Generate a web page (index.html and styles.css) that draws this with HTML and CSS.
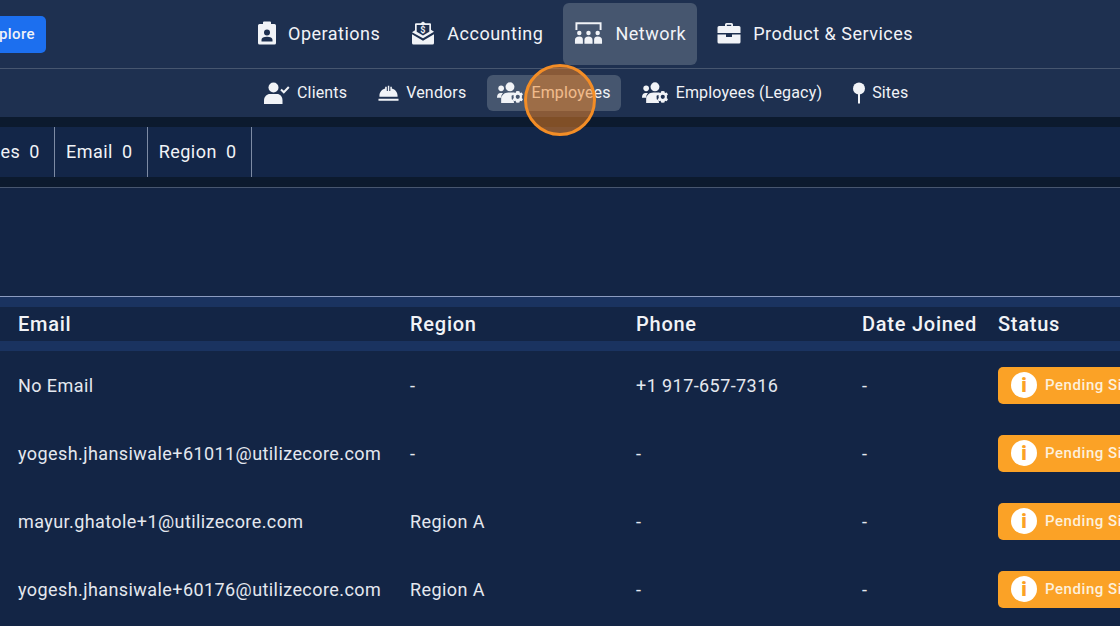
FILE: index.html
```html
<!DOCTYPE html>
<html>

<head>
    <meta charset="utf-8">
    <title>Employees</title>
    <link rel="stylesheet" href="styles.css">
</head>

<body>

<div class="page">
    <div class="topbar">
        <a class="explore_btn">Explore</a>
        <nav class="main_nav">
            <a class="main_link">
                <svg class="main_icon" viewBox="0 0 18 24" width="18" height="24"><path fill="#f1f3f7" fill-rule="evenodd" d="M5 1.500a1 1 0 0 1 1-1h6a1 1 0 0 1 1 1V3h3.500A1.500 1.500 0 0 1 18 4.500V22a1.500 1.500 0 0 1-1.500 1.500h-15A1.500 1.500 0 0 1 0 22V4.500A1.500 1.500 0 0 1 1.500 3H5zM9 8.500a3 3 0 1 0 0 6 3 3 0 0 0 0-6zM3.500 20.500h11v-1.800c0-1.800-2.200-3-5.500-3s-5.500 1.200-5.500 3z"/></svg>
                Operations
            </a>
            <a class="main_link">
                <svg class="main_icon" viewBox="0 0 24 24" width="24" height="24"><path fill="#f1f3f7" d="M12 .5l2.500 1.800H19a1 1 0 0 1 1 1v5.500l3 2-11 6.500L1 11.300l3-2V3.300a1 1 0 0 1 1-1h4.500z"/><path fill="#f1f3f7" d="M1 13.300l11 6.500 11-6.500V22a1.500 1.500 0 0 1-1.500 1.500h-19A1.500 1.500 0 0 1 1 22z"/><path fill="#1e3050" d="M5.700 4h12.600v6.800L12 14.600l-6.300-3.800z"/><text x="12" y="11.500" text-anchor="middle" class="icon_dollar">$</text></svg>
                Accounting
            </a>
            <a class="main_link active">
                <svg class="main_icon" viewBox="0 0 30 24" width="29" height="24"><path fill="none" stroke="#f1f3f7" stroke-width="2" d="M2.500 9V2h25v7"/><g fill="#f1f3f7"><circle cx="5.500" cy="12" r="2.300"/><circle cx="15" cy="12" r="2.300"/><circle cx="24.500" cy="12" r="2.300"/><path d="M1 23v-3.500c0-2.500 1.500-3.800 4.500-3.800s3.700 1.300 3.700 3.800V23zM10.800 23v-3.500c0-2.500 1.500-3.800 4.200-3.800s4.200 1.300 4.200 3.800V23zM20.800 23v-3.500c0-2.500.7-3.800 3.700-3.800s4.500 1.300 4.500 3.800V23z"/></g></svg>
                Network
            </a>
            <a class="main_link">
                <svg class="main_icon" viewBox="0 0 24 24" width="24" height="24"><path fill="#f1f3f7" fill-rule="evenodd" d="M8 5V3.500A1.500 1.500 0 0 1 9.500 2h5A1.500 1.500 0 0 1 16 3.500V5h6a1.500 1.500 0 0 1 1.500 1.500V12H.5V6.500A1.500 1.500 0 0 1 2 5zM9.800 3.800V5h4.400V3.800z"/><path fill="#f1f3f7" d="M.5 13.500H9V16h6v-2.500h8.500V21a1.500 1.500 0 0 1-1.500 1.500H2A1.500 1.500 0 0 1 .5 21z"/></svg>
                Product &amp; Services
            </a>
        </nav>
    </div>

    <div class="subbar">
        <a class="sub_link">
            <svg class="sub_icon" viewBox="0 0 26 22" width="26" height="22"><g fill="#f1f3f7"><circle cx="9.500" cy="5.500" r="5"/><path d="M0 22v-3.500C0 14.500 3 12 6 12h7c3 0 5.500 2.500 5.500 6.500V22z"/></g><path fill="none" stroke="#f1f3f7" stroke-width="2" d="M17 7.500l2.800 2.800 5-5.300"/></svg>
            Clients
        </a>
        <a class="sub_link">
            <svg class="sub_icon" viewBox="0 0 22 18" width="21" height="18"><path fill="#f1f3f7" d="M1.500 13v-1c0-4 2.300-6.700 6-7.800V2.500h1.700v4.500h1.100V1.500h1.500V7h1.100V2.500h1.600v1.700c3.700 1.100 6 3.800 6 7.800v1zM.5 15h21v2h-21z"/></svg>
            Vendors
        </a>
        <a class="sub_link active">
            <svg class="sub_icon" viewBox="0 0 26 20" width="27" height="21"><use href="#team_gear"/></svg>
            Employees
        </a>
        <a class="sub_link">
            <svg class="sub_icon" viewBox="0 0 26 20" width="27" height="21">
                <g id="team_gear" fill="#f1f3f7">
                    <circle cx="12.500" cy="4.500" r="4.300"/>
                    <circle cx="4" cy="6" r="2.700"/>
                    <path d="M0 14.500c0-2.500 1.500-4 3.500-4h2.200C4.500 12 4 13.500 4 15H0zM4 20v-3.500C4 12.800 7 10 11 10h4c.6 0 1 .1 1.500.2l-.5 2-2 1 .2 3.300 1.800 1.200.4 2.300z"/>
                    <path fill-rule="evenodd" d="M20 8.500l1.600.3.500 1.700 1.700-.5 1.200 2-1.200 1.200.3 1-.3 1 1.200 1.200-1.200 2-1.700-.5-.5 1.700-1.600.3-1.600-.3-.5-1.700-1.700.5-1.200-2 1.200-1.200-.3-1 .3-1-1.200-1.200 1.200-2 1.700.5.500-1.700zM20 12.200a2 2 0 1 0 0 4 2 2 0 0 0 0-4z"/>
                </g>
            </svg>
            Employees (Legacy)
        </a>
        <a class="sub_link">
            <svg class="sub_icon" viewBox="0 0 12 22" width="12" height="22"><circle cx="6" cy="6.500" r="6" fill="#f1f3f7"/><rect x="5" y="12" width="2" height="9.500" fill="#f1f3f7"/></svg>
            Sites
        </a>
    </div>

    <div class="dark_strip"></div>
    <div class="filter_bar">
        <div class="filter_cell">Statuses <b>0</b></div>
        <div class="filter_cell">Email <b>0</b></div>
        <div class="filter_cell">Region <b>0</b></div>
    </div>
    <div class="dark_strip"></div>

    <div class="empty_panel"></div>

    <div class="table_wrap">
        <div class="band"></div>
        <div class="row head">
            <div>Email</div>
            <div>Region</div>
            <div>Phone</div>
            <div>Date Joined</div>
            <div>Status</div>
        </div>
        <div class="band"></div>

        <div class="row">
            <div>No Email</div>
            <div>-</div>
            <div>+1 917-657-7316</div>
            <div>-</div>
            <div><span class="badge"><span class="badge_i">i</span>Pending Signup</span></div>
        </div>
        <div class="row">
            <div>yogesh.jhansiwale+61011@utilizecore.com</div>
            <div>-</div>
            <div>-</div>
            <div>-</div>
            <div><span class="badge"><span class="badge_i">i</span>Pending Signup</span></div>
        </div>
        <div class="row">
            <div>mayur.ghatole+1@utilizecore.com</div>
            <div>Region A</div>
            <div>-</div>
            <div>-</div>
            <div><span class="badge"><span class="badge_i">i</span>Pending Signup</span></div>
        </div>
        <div class="row">
            <div>yogesh.jhansiwale+60176@utilizecore.com</div>
            <div>Region A</div>
            <div>-</div>
            <div>-</div>
            <div><span class="badge"><span class="badge_i">i</span>Pending Signup</span></div>
        </div>
    </div>

    <div class="click_ring"></div>
</div>

</body>

</html>
```

FILE: styles.css
```css
* {
    margin: 0px;
    box-sizing: border-box;
}

html, body {
    height: 100%;
    overflow: hidden;
}

body {
    background-color: #132545;
    color: #f1f3f7;
    font-family: Roboto, "Liberation Sans", sans-serif;
}

.page {
    position: relative;
    width: 1120px;
    height: 626px;
    overflow: hidden;
}

.topbar {
    display: flex;
    align-items: center;
    height: 69px;
    background-color: #1e3050;
    border-bottom: 1px solid #47566f;
}

.explore_btn {
    display: flex;
    align-items: center;
    justify-content: flex-end;
    flex: none;
    width: 76px;
    height: 37px;
    margin-left: -30px;
    padding-right: 11px;
    background-color: #1c6fef;
    border-radius: 5px;
    font-size: 15px;
    font-weight: 500;
    letter-spacing: 0.4px;
}

.main_nav {
    display: flex;
    align-items: center;
    gap: 9px;
    margin-left: 201px;
}

.main_link {
    display: flex;
    align-items: center;
    gap: 12px;
    height: 62px;
    padding: 0px 11px 2px;
    border-radius: 6px;
    font-size: 18px;
    letter-spacing: 0.5px;
    white-space: nowrap;
}

.main_link.active {
    background-color: #46566f;
}

.main_icon {
    flex: none;
}

.icon_dollar {
    font-family: Roboto, sans-serif;
    font-size: 9px;
    font-weight: 700;
    fill: #f1f3f7;
}

.subbar {
    display: flex;
    align-items: center;
    gap: 11px;
    height: 48px;
    padding-left: 254px;
    padding-bottom: 1px;
    background-color: #1e3050;
}

.sub_link {
    display: flex;
    align-items: center;
    gap: 7px;
    height: 36px;
    padding: 0px 10px;
    border-radius: 6px;
    font-size: 16px;
    letter-spacing: 0.17px;
    white-space: nowrap;
}

.sub_link.active {
    background-color: #46566f;
}

.sub_icon {
    flex: none;
}

.dark_strip {
    height: 10px;
    background-color: #0c1a2e;
}

.filter_bar {
    display: flex;
    height: 50px;
    background-color: #132648;
    margin-left: -65px;
}

.filter_cell {
    display: flex;
    align-items: center;
    gap: 9px;
    padding: 0px 14px 1px 11px;
    border-right: 1px solid #7d8ba4;
    font-size: 18px;
    letter-spacing: 0.5px;
    white-space: nowrap;
}

.filter_cell b {
    font-weight: 400;
}

.empty_panel {
    height: 109px;
    border-top: 1px solid #47566f;
}

.table_wrap {
    border-top: 1px solid #8c9cc0;
}

.band {
    height: 10px;
    background-color: #1a3360;
}

.row {
    display: grid;
    grid-template-columns: 392px 226px 226px 136px 1fr;
    align-items: center;
    height: 68px;
    padding-left: 18px;
    font-size: 18px;
    letter-spacing: 0.42px;
    white-space: nowrap;
    color: #e4e8ef;
}

.row.head {
    height: 34px;
    font-size: 20px;
    font-weight: 500;
    letter-spacing: 0.75px;
    color: #f1f3f7;
}

.badge {
    display: inline-flex;
    align-items: center;
    gap: 8px;
    height: 37px;
    padding: 0px 13px;
    background-color: #fba226;
    border-radius: 5px;
    font-size: 15px;
    font-weight: 500;
    letter-spacing: 0.55px;
    color: #fdf0dc;
}

.badge_i {
    display: flex;
    align-items: center;
    justify-content: center;
    width: 26px;
    height: 26px;
    border-radius: 50%;
    background-color: #fff;
    color: #fba226;
    font-size: 20px;
    font-weight: 900;
    letter-spacing: 0px;
}

.click_ring {
    position: absolute;
    left: 524px;
    top: 64px;
    width: 72px;
    height: 72px;
    border-radius: 50%;
    border: 3px solid #f38d26;
    background-color: rgba(243, 132, 32, 0.5);
}
```
